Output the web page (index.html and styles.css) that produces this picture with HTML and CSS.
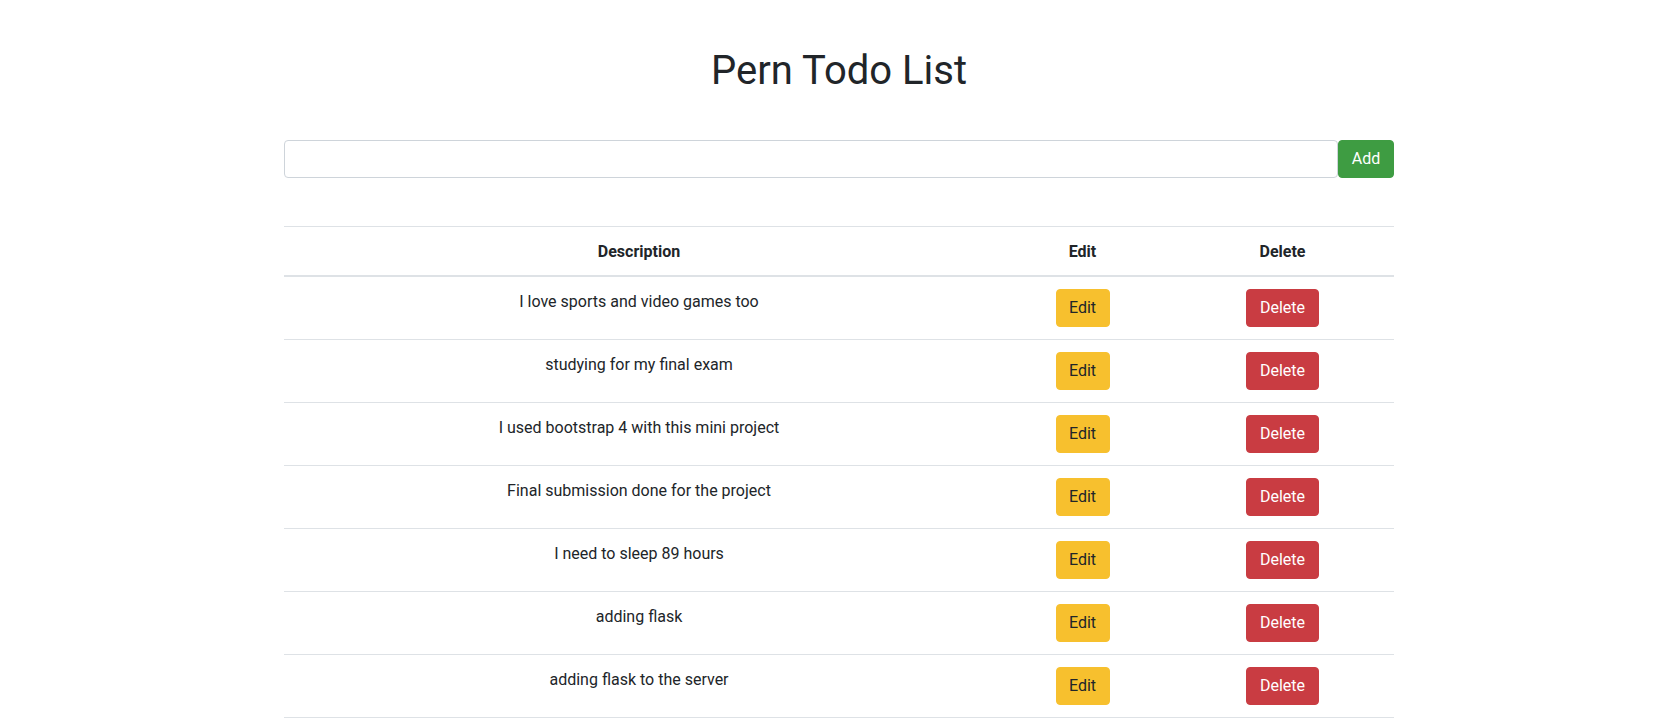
FILE: index.html
```html
<!DOCTYPE html>
<html lang="en">
<head>
<meta charset="utf-8">
<title>Pern Todo List</title>
<link rel="stylesheet" href="styles.css">
</head>
<body>
<div class="page">
  <div class="container">
    <h1 class="title">Pern Todo List</h1>
    <form class="add-form">
      <input type="text" class="form-control">
      <button type="button" class="btn btn-success">Add</button>
    </form>
    <table class="table">
      <thead>
        <tr>
          <th class="col-desc">Description</th>
          <th class="col-edit">Edit</th>
          <th class="col-del">Delete</th>
        </tr>
      </thead>
      <tbody>
        <tr><td class="desc">I love sports and video games too</td><td><button class="btn btn-warning">Edit</button></td><td><button class="btn btn-danger">Delete</button></td></tr>
        <tr><td class="desc">studying for my final exam</td><td><button class="btn btn-warning">Edit</button></td><td><button class="btn btn-danger">Delete</button></td></tr>
        <tr><td class="desc">I used bootstrap 4 with this mini project</td><td><button class="btn btn-warning">Edit</button></td><td><button class="btn btn-danger">Delete</button></td></tr>
        <tr><td class="desc">Final submission done for the project</td><td><button class="btn btn-warning">Edit</button></td><td><button class="btn btn-danger">Delete</button></td></tr>
        <tr><td class="desc">I need to sleep 89 hours</td><td><button class="btn btn-warning">Edit</button></td><td><button class="btn btn-danger">Delete</button></td></tr>
        <tr><td class="desc">adding flask</td><td><button class="btn btn-warning">Edit</button></td><td><button class="btn btn-danger">Delete</button></td></tr>
        <tr><td class="desc">adding flask to the server</td><td><button class="btn btn-warning">Edit</button></td><td><button class="btn btn-danger">Delete</button></td></tr>
      </tbody>
    </table>
  </div>
</div>
</body>
</html>
```
FILE: styles.css
```css
html, body {
  margin: 0;
  padding: 0;
  background: #fff;
}
body {
  font-family: Roboto, "Liberation Sans", sans-serif;
  font-size: 16px;
  line-height: 1.5;
  color: #212529;
}
.page {
  padding-left: 22px;
}
.container {
  max-width: 1110px;
  margin: 0 auto;
}
.title {
  margin: 47px 0 0;
  font-size: 40px;
  font-weight: 400;
  line-height: 48px;
  text-align: center;
}
.add-form {
  display: flex;
  margin-top: 45px;
}
.form-control {
  flex: 1;
  height: 38px;
  box-sizing: border-box;
  border: 1px solid #ced4da;
  border-radius: 4px;
  padding: 6px 12px;
  font: inherit;
  margin: 0;
}
.btn {
  display: inline-block;
  box-sizing: border-box;
  height: 38px;
  padding: 6px 12px;
  border: 1px solid transparent;
  border-radius: 4px;
  font-family: inherit;
  font-size: 16px;
  line-height: 24px;
  cursor: pointer;
}
.add-form .btn {
  width: 56px;
}
.btn-warning {
  width: 54px;
}
.btn-danger {
  width: 73px;
}
.btn-success {
  background: #3e9c42;
  border-color: #3e9c42;
  color: #fff;
}
.btn-warning {
  background: #f7c02e;
  border-color: #f7c02e;
  color: #212529;
}
.btn-danger {
  background: #c93c42;
  border-color: #c93c42;
  color: #fff;
}
.table {
  width: 100%;
  margin-top: 48px;
  border-collapse: collapse;
  table-layout: fixed;
}
.col-desc { width: 686px; }
.col-edit { width: 153px; }
.col-del { width: 199px; }
.table th,
.table td {
  padding: 12px;
  text-align: center;
  vertical-align: top;
  border-top: 1px solid #dee2e6;
}
.table th {
  font-weight: 700;
  vertical-align: bottom;
  padding: 13px 12px 11px;
  border-bottom: 2px solid #dee2e6;
}
.table td.desc {
  padding: 13px 12px 11px;
}
.table tbody tr:last-child td {
  border-bottom: 1px solid #dee2e6;
}
```
